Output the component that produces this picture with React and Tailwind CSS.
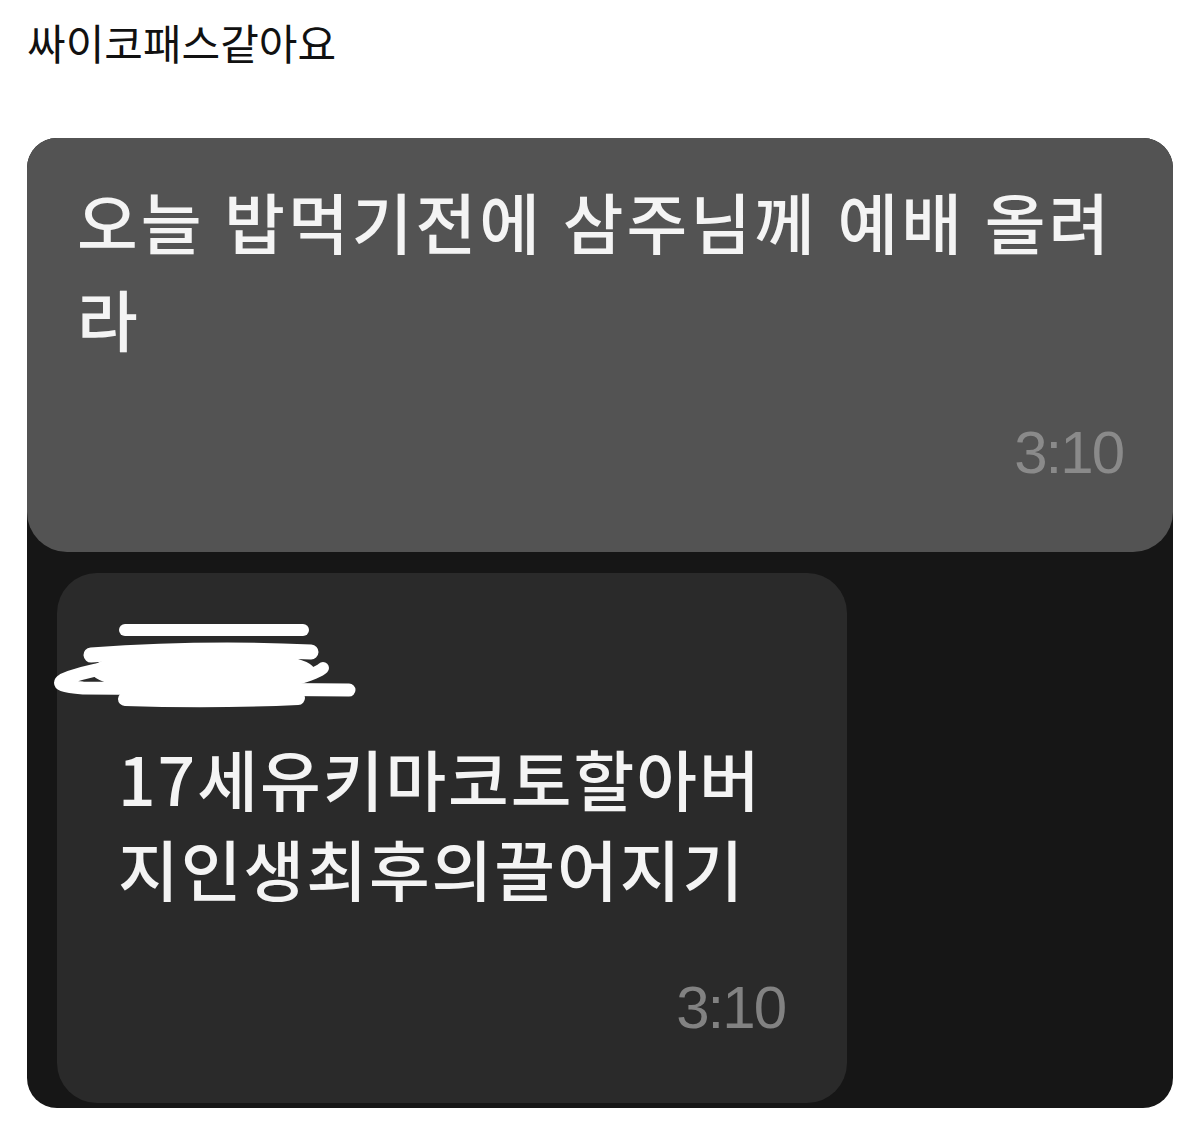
import React from 'react';

const KR = { fontFamily: '"Noto Sans CJK KR", "Noto Sans", sans-serif' };

const Scribble = () => (
  <svg width="305" height="95" viewBox="0 0 305 95" className="-ml-[65px] block" fill="none">
    <g stroke="#ffffff" strokeLinecap="round" strokeLinejoin="round">
      <path d="M72 12 L250 12" strokeWidth="12" />
      <path d="M38 37 Q150 29 258 34" strokeWidth="15" />
      <ellipse cx="150" cy="53" rx="110" ry="20" fill="#ffffff" strokeWidth="4" />
      <path d="M296 72 L30 70 Q0 68 10 62 Q40 48 125 42" strokeWidth="13" />
      <path d="M72 81 Q160 84 245 80" strokeWidth="14" />
      <path d="M240 62 Q265 55 270 50" strokeWidth="12" />
    </g>
  </svg>
);

const Stamp = ({ className }) => (
  <div
    className={`text-[60px] leading-none tracking-[-2px] ${className}`}
    style={{ fontFamily: '"Liberation Sans", Arial, sans-serif' }}
  >
    3:10
  </div>
);

export default function App() {
  return (
    <div className="min-h-[1144px] bg-white pl-[27px] pr-[27px] pt-[12px]">
      <h1 className="text-[42px] leading-[60px] text-[#111] h-[126px]" style={KR}>
        싸이코패스같아요
      </h1>

      <div className="h-[970px] rounded-[30px] bg-[#161616] overflow-hidden flex flex-col" style={KR}>
        <div className="h-[414px] shrink-0 bg-[#535353] rounded-b-[40px] pt-[34px] pl-[50px] pr-[40px] flex flex-col">
          <p className="text-[66px] leading-[97px] font-medium text-[#f4f4f4] whitespace-nowrap tracking-[3px] [word-spacing:2px]">
            오늘 밥먹기전에 삼주님께 예배 올려
            <br />
            라
          </p>
          <Stamp className="self-end mr-[10px] mt-[57px] text-[#8a8a8a]" />
        </div>

        <div className="mt-[21px] ml-[30px] w-[790px] h-[530px] bg-[#2a2a2a] rounded-[40px] pt-[45px] pl-[61px] flex flex-col">
          <Scribble />
          <p className="mt-[19px] text-[66px] leading-[90px] font-medium text-[#f4f4f4] whitespace-nowrap tracking-[2px]">
            17세유키마코토할아버
            <br />
            지인생최후의끌어지기
          </p>
          <Stamp className="self-end mr-[62px] mt-[66px] text-[#828282]" />
        </div>
      </div>
    </div>
  );
}
